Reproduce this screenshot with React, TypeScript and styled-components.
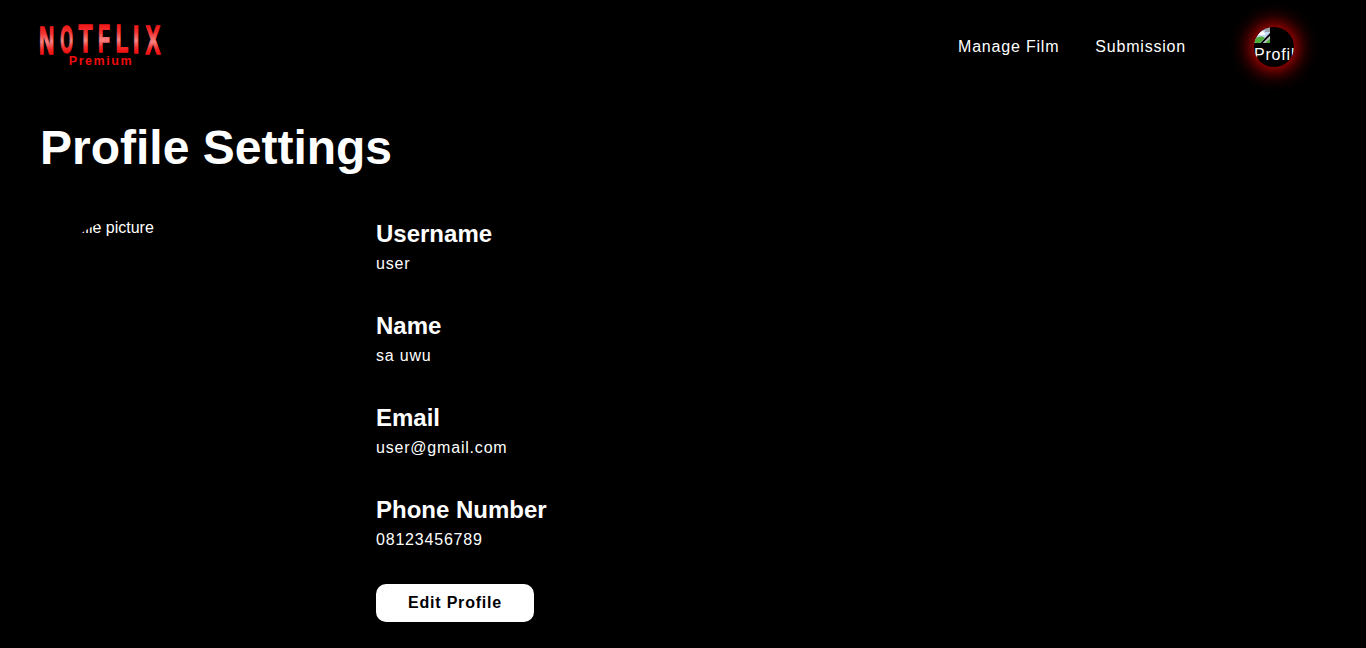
import React from "react";
import styled, { createGlobalStyle } from "styled-components";

const GlobalStyle = createGlobalStyle`
  *, *::before, *::after { box-sizing: border-box; }
  html, body { margin: 0; background: #000; }
  body {
    color: #fff;
    font-family: "Liberation Sans", Arial, sans-serif;
    font-size: 16px;
    line-height: 24px;
  }
  h1, h2, p { margin: 0; }
`;

const Page = styled.div`
  min-height: 648px;
  background: #000;
`;

const Header = styled.header`
  display: flex;
  align-items: center;
  justify-content: space-between;
  height: 94px;
  padding: 0 72px 0 36px;
`;

const Logo = styled.svg`
  display: block;
  width: 130px;
  height: 54px;
  overflow: visible;
  font-family: "Liberation Sans", Arial, sans-serif;
  font-weight: 700;
`;

const Nav = styled.nav`
  display: flex;
  align-items: center;
`;

const NavLink = styled.a`
  margin-right: 36px;
  letter-spacing: 0.8px;
  color: #fff;
`;

const Avatar = styled.div`
  width: 40px;
  height: 40px;
  margin-left: 32px;
  overflow: hidden;
  border-radius: 50%;
  white-space: nowrap;
  box-shadow: 0 0 20px 3px #f00000;
`;

const BrokenIcon = styled.svg`
  display: block;
  width: 16px;
  height: 16px;
`;

const AvatarAlt = styled.span`
  display: block;
  line-height: 24px;
  letter-spacing: 0.8px;
`;

const Main = styled.main`
  padding: 24px 40px 0;
`;

const Title = styled.h1`
  font-size: 48px;
  line-height: 60px;
`;

const Columns = styled.div`
  display: flex;
  gap: 144px;
  margin-top: 38px;
`;

const Picture = styled.div`
  flex: none;
  width: 192px;
  height: 192px;
  padding-left: 16px;
  overflow: hidden;
  border-radius: 50%;
  line-height: 24px;
`;

const Details = styled.section`
  flex: 1;
`;

const Field = styled.div`
  height: 92px;
`;

const Label = styled.h2`
  font-size: 24px;
  line-height: 36px;
`;

const Value = styled.p`
  line-height: 24px;
  letter-spacing: 0.8px;
`;

const EditButton = styled.button`
  width: 158px;
  height: 38px;
  padding: 0;
  border: 0;
  border-radius: 10px;
  background: #fff;
  color: #000;
  font: 700 16px "Liberation Sans", Arial, sans-serif;
  letter-spacing: 0.8px;
`;

const letters = [
  { char: "N", x: 4.3, width: 12.4, top: 6.6, bottom: 33.6 },
  { char: "O", x: 25, width: 11.4, top: 5.8, bottom: 32.6 },
  { char: "T", x: 43, width: 13, top: 5.6, bottom: 32 },
  { char: "F", x: 63.4, width: 10, top: 5.2, bottom: 31.6 },
  { char: "L", x: 81.2, width: 10.4, top: 5.2, bottom: 31.8 },
  { char: "I", x: 98.6, width: 3.2, top: 5.6, bottom: 32.6 },
  { char: "X", x: 110, width: 14, top: 6.2, bottom: 33.6 },
];

/* Left bearing and ink width of each capital, in em. */
const glyphBox: Record<string, [number, number]> = {
  N: [0.067, 0.587],
  O: [0.041, 0.696],
  T: [0.021, 0.568],
  F: [0.067, 0.511],
  L: [0.067, 0.511],
  I: [0.067, 0.144],
  X: [0.017, 0.632],
};

const fields = [
  ["Username", "user"],
  ["Name", "sa uwu"],
  ["Email", "user@gmail.com"],
  ["Phone Number", "08123456789"],
];

export default function App() {
  return (
    <Page>
      <GlobalStyle />
      <Header>
        <Logo viewBox="0 0 130 54" aria-label="Notflix Premium">
          <defs>
            <linearGradient id="shine" gradientUnits="userSpaceOnUse" x1="0" y1="-27.5" x2="0" y2="0">
              <stop offset="0" stopColor="#f01818" />
              <stop offset="0.25" stopColor="#f43434" />
              <stop offset="0.56" stopColor="#f88484" />
              <stop offset="0.82" stopColor="#f42c2c" />
              <stop offset="1" stopColor="#f01010" />
            </linearGradient>
          </defs>
          {letters.map(({ char, x, width, top, bottom }) => {
            const [left, ink] = glyphBox[char];
            const sx = width / (ink * 40);
            const sy = (bottom - top) / (0.688 * 40);
            return (
              <text
                key={char}
                fill="url(#shine)"
                stroke="url(#shine)"
                strokeWidth="1.5"
                fontSize="40"
                transform={`translate(${x - left * 40 * sx} ${bottom}) scale(${sx} ${sy})`}
              >
                {char}
              </text>
            );
          })}
          <text x="32.8" y="45" fontSize="12.5" letterSpacing="1.55" fill="#f00c0c">
            Premium
          </text>
        </Logo>
        <Nav>
          <NavLink>Manage Film</NavLink>
          <NavLink>Submission</NavLink>
          <Avatar>
            <BrokenIcon viewBox="0 0 16 16">
              <path d="M0 0h11l5 5v11H0z" fill="#c6d9f4" />
              <path d="M3 8c0-2 1.500-2.500 2.500-2.500C6 3.500 10 3.500 10 6c1.500 0 2 2 .5 2z" fill="#fff" />
              <path d="M0 16v-3c4-4 8-4.500 11-2l-5 5z" fill="#4fae3a" />
              <path d="M11 0h5v5h-5z" fill="#9aa2aa" />
              <path d="M16 6v3l-7 7H6.500z" fill="#000" />
              <path d="M16 9v7H9z" fill="#b9c6c0" />
              <path d="M16 11.500V16h-4.500z" fill="#4fae3a" />
            </BrokenIcon>
            <AvatarAlt>Profile</AvatarAlt>
          </Avatar>
        </Nav>
      </Header>
      <Main>
        <Title>Profile Settings</Title>
        <Columns>
          <Picture>Profile picture</Picture>
          <Details>
            {fields.map(([label, value]) => (
              <Field key={label}>
                <Label>{label}</Label>
                <Value>{value}</Value>
              </Field>
            ))}
            <EditButton>Edit Profile</EditButton>
          </Details>
        </Columns>
      </Main>
    </Page>
  );
}
